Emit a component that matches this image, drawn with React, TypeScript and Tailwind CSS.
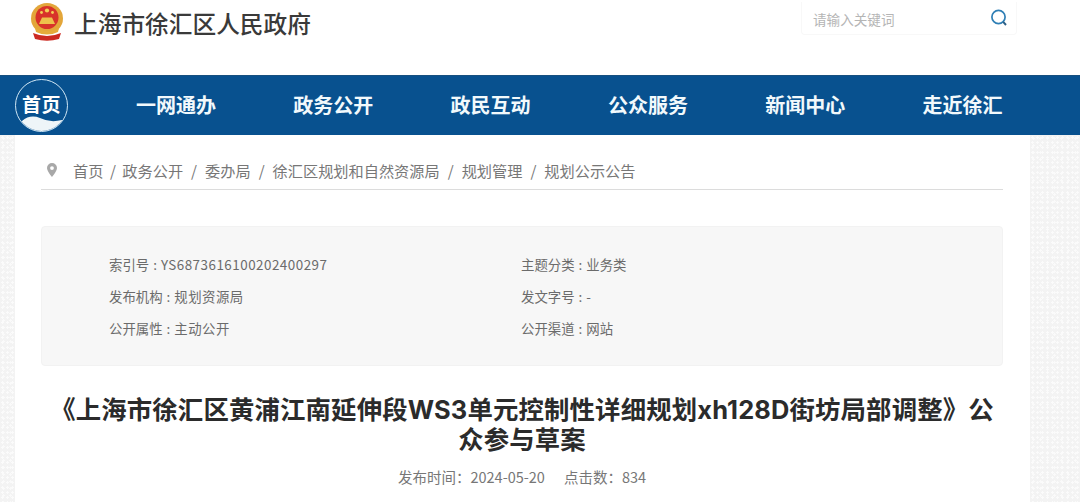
const navItems = ["一网通办", "政务公开", "政民互动", "公众服务", "新闻中心", "走近徐汇"];

const crumbs = ["首页", "政务公开", "委办局", "徐汇区规划和自然资源局", "规划管理", "规划公示公告"];

const info = [
  ["索引号", "YS6873616100202400297", "主题分类", "业务类"],
  ["发布机构", "规划资源局", "发文字号", "-"],
  ["公开属性", "主动公开", "公开渠道", "网站"],
];

const texture =
  "bg-[#f3f3f3] bg-[radial-gradient(#fbfbfb_1px,transparent_1.2px),radial-gradient(#fafafa_1px,transparent_1.2px)] bg-[length:5px_5px,7px_7px]";

function Emblem() {
  return (
    <svg width="34" height="38" viewBox="0 0 34 38" className="shrink-0">
      <ellipse cx="17" cy="15.5" rx="16" ry="15.5" fill="#e3a63a" />
      <circle cx="17" cy="14.5" r="11.5" fill="#d8322a" />
      <circle cx="11.5" cy="9.5" r="1.4" fill="#f3cf55" />
      <circle cx="17" cy="7.5" r="2.1" fill="#f3cf55" />
      <circle cx="22.5" cy="9.5" r="1.4" fill="#f3cf55" />
      <path d="M9 21 L12 14.5 H22 L25 21 Z" fill="#eec04b" />
      <path d="M5 25 Q17 31 29 25 L28 29 Q17 34 6 29 Z" fill="#e5ab3a" />
      <path d="M3 30 Q17 36 31 30 L29 36 Q17 39.5 5 36 Z" fill="#cc2a22" />
    </svg>
  );
}

function HomeBadge() {
  return (
    <div className="relative w-[53px] h-[53px] rounded-full border-[1.5px] border-[#cfe6f4] overflow-hidden flex justify-center shrink-0">
      <span className="mt-[10px] text-[19px] leading-[28px] font-bold text-white tracking-[0.5px]">首页</span>
      <svg width="50" height="18" viewBox="0 0 50 18" className="absolute left-0 bottom-0">
        <path d="M6 8 Q14 1 24 5 Q34 10 46 7 L50 18 H0 Z" fill="#eef5f8" />
      </svg>
    </div>
  );
}

export default function App() {
  return (
    <div className="h-[502px] w-[1080px] overflow-hidden bg-white font-['Noto_Sans_CJK_SC','Noto_Sans',sans-serif]">
      <header className="h-[75px] flex items-start justify-between">
        <div className="flex items-start pl-[30px] pt-[3px] gap-[10px]">
          <Emblem />
          <h1 className="text-[23.7px] leading-[40px] font-medium text-[#3a3a3a]">上海市徐汇区人民政府</h1>
        </div>
        <div className="mr-[63px] mt-[2px] w-[216px] h-[33px] flex items-center justify-between pl-[11px] pr-[8px] border border-[#f8f8f8] border-t-0 rounded-b">
          <span className="text-[13.6px] pt-[3px] text-[#b5b5b5]">请输入关键词</span>
          <svg width="18" height="18" viewBox="0 0 18 18" fill="none" stroke="#2f7fb5" strokeWidth="1.7">
            <circle cx="8.5" cy="8" r="6.6" />
            <path d="M13.2 12.8 L16 16" stroke="#2c5f86" strokeWidth="1.9" />
          </svg>
        </div>
      </header>

      <nav className="h-[60px] bg-[#08518f] border-t border-[#17507f] flex items-center pl-[15px]">
        <HomeBadge />
        <div className="flex ml-[68px] gap-[77.3px] pb-[1px]">
          {navItems.map((item) => (
            <span key={item} className="w-[80px] text-[20px] font-bold text-[#f2f9fc] text-center whitespace-nowrap">
              {item}
            </span>
          ))}
        </div>
      </nav>

      <div className="flex h-[367px]">
        <div className={`w-[15px] shrink-0 ${texture}`} />
        <main className="w-[1015px] bg-white pl-[26px] pr-[27px]">
          <div className="h-[55px] border-b border-[#dcdcdc] flex items-center pt-[16px]">
            <svg width="10" height="14" viewBox="0 0 10 14" className="ml-[6px] mr-[16px] shrink-0">
              <path
                fillRule="evenodd"
                d="M5 0a5 5 0 0 1 5 5c0 3.4-5 9-5 9S0 8.4 0 5a5 5 0 0 1 5-5zm0 3.2a1.9 1.9 0 1 0 0 3.8 1.9 1.9 0 0 0 0-3.8z"
                fill="#a8a8a8"
              />
            </svg>
            <div className="flex text-[15.2px] text-[#777]">
              {crumbs.map((c, i) => (
                <span key={c} className="flex">
                  {i === 1 && <span className="mx-[6.5px]">/</span>}
                  {i > 1 && <span className="mx-[8px]">/</span>}
                  {c}
                </span>
              ))}
            </div>
          </div>

          <section className="mt-[36px] h-[140px] bg-[#f7f7f7] rounded-sm border border-[#f2f2f2] pl-[67px] pt-[21px]">
            {info.map(([k1, v1, k2, v2]) => (
              <div key={k1} className="h-[32px] flex items-center text-[13.4px] text-[#6b6b6b]">
                <span className="w-[412px] flex">
                  {k1}
                  <span className="mx-[4px]">:</span>
                  <span className="tracking-[0.5px]">{v1}</span>
                </span>
                <span className="flex">
                  {k2}
                  <span className="mx-[4px]">:</span>
                  {v2}
                </span>
              </div>
            ))}
          </section>

          <h2 className="mt-[29px] text-[25.4px] leading-[30px] font-bold tracking-[0.15px] text-[#2b2b2b] text-center font-['Inter','Noto_Sans_CJK_SC',sans-serif]">
            《上海市徐汇区黄浦江南延伸段WS3单元控制性详细规划xh128D街坊局部调整》公
            <br />
            众参与草案
          </h2>

          <div className="mt-[11px] flex justify-center text-[14.5px] text-[#777]">
            <span>发布时间：</span>
            <span>2024-05-20</span>
            <span className="ml-[19px]">点击数：</span>
            <span>834</span>
          </div>
        </main>
        <div className={`flex-1 ${texture}`} />
      </div>
    </div>
  );
}
